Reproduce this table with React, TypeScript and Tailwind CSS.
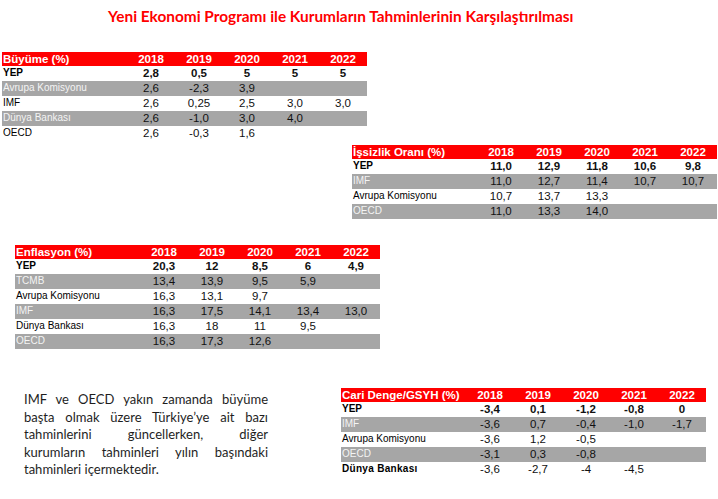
import React from "react";

type Row = {
  label: string;
  values: string[];
  shade?: boolean;
  bold?: boolean;
  boldLabel?: boolean;
};

interface TableProps {
  title: string;
  rows: Row[];
  className?: string;
}

const years = ["2018", "2019", "2020", "2021", "2022"];

function ForecastTable({ title, rows, className = "" }: TableProps) {
  return (
    <div className={`w-[365px] font-['Liberation_Sans',Arial,sans-serif] ${className}`}>
      {/* header */}
      <div className="grid grid-cols-[125px_repeat(5,48px)] h-[14px] bg-[#ff0000] text-white font-bold text-[11.5px] leading-[14px]">
        <div className="pl-[1px] whitespace-nowrap">{title}</div>
        {years.map((y) => (
          <div key={y} className="text-center">
            {y}
          </div>
        ))}
      </div>
      {rows.map((r) => (
        <div
          key={r.label}
          className={`grid grid-cols-[125px_repeat(5,48px)] h-[15px] items-center ${
            r.shade ? "bg-[#a6a6a6]" : "bg-white"
          } ${r.bold ? "font-bold" : ""}`}
        >
          <div
            className={`pl-[1px] text-[10px] leading-[13px] self-start whitespace-nowrap ${
              r.shade ? "text-[#f4f4f4]" : "text-black"
            } ${r.boldLabel ? "font-bold tracking-[0.3px]" : ""}`}
          >
            {r.label}
          </div>
          {years.map((y, i) => (
            <div key={y} className="text-center text-[11.5px] leading-[15px] text-[#111]">
              {r.values[i] ?? ""}
            </div>
          ))}
        </div>
      ))}
    </div>
  );
}

const growth: Row[] = [
  { label: "YEP", values: ["2,8", "0,5", "5", "5", "5"], bold: true },
  { label: "Avrupa Komisyonu", values: ["2,6", "-2,3", "3,9"], shade: true },
  { label: "IMF", values: ["2,6", "0,25", "2,5", "3,0", "3,0"] },
  { label: "Dünya Bankası", values: ["2,6", "-1,0", "3,0", "4,0"], shade: true },
  { label: "OECD", values: ["2,6", "-0,3", "1,6"] },
];

const unemployment: Row[] = [
  { label: "YEP", values: ["11,0", "12,9", "11,8", "10,6", "9,8"], bold: true },
  { label: "IMF", values: ["11,0", "12,7", "11,4", "10,7", "10,7"], shade: true },
  { label: "Avrupa Komisyonu", values: ["10,7", "13,7", "13,3"] },
  { label: "OECD", values: ["11,0", "13,3", "14,0"], shade: true },
];

const inflation: Row[] = [
  { label: "YEP", values: ["20,3", "12", "8,5", "6", "4,9"], bold: true },
  { label: "TCMB", values: ["13,4", "13,9", "9,5", "5,9"], shade: true },
  { label: "Avrupa Komisyonu", values: ["16,3", "13,1", "9,7"] },
  { label: "IMF", values: ["16,3", "17,5", "14,1", "13,4", "13,0"], shade: true },
  { label: "Dünya Bankası", values: ["16,3", "18", "11", "9,5"] },
  { label: "OECD", values: ["16,3", "17,3", "12,6"], shade: true },
];

const currentAccount: Row[] = [
  { label: "YEP", values: ["-3,4", "0,1", "-1,2", "-0,8", "0"], bold: true },
  { label: "IMF", values: ["-3,6", "0,7", "-0,4", "-1,0", "-1,7"], shade: true },
  { label: "Avrupa Komisyonu", values: ["-3,6", "1,2", "-0,5"] },
  { label: "OECD", values: ["-3,1", "0,3", "-0,8"], shade: true },
  { label: "Dünya Bankası", values: ["-3,6", "-2,7", "-4", "-4,5"], boldLabel: true },
];

const noteLines = [
  "IMF ve OECD yakın zamanda büyüme",
  "başta olmak üzere Türkiye’ye ait bazı",
  "tahminlerini güncellerken, diğer",
  "kurumların tahminleri yılın başındaki",
];

export default function App() {
  return (
    <div className="w-[718px] h-[499px] bg-white overflow-hidden flex flex-col">
      {/* Title */}
      <div className="h-[52px] pl-[108px] pt-[5px]">
        <h1 className="text-[#ff0000] font-bold text-[15.4px] leading-[22px] whitespace-nowrap font-['Lato','Open_Sans',sans-serif]">
          Yeni Ekonomi Programı ile Kurumların Tahminlerinin Karşılaştırılması
        </h1>
      </div>

      <ForecastTable title="Büyüme (%)" rows={growth} className="ml-[2px]" />
      <ForecastTable title="İşsizlik Oranı (%)" rows={unemployment} className="ml-[352px] mt-[4px]" />
      <ForecastTable title="Enflasyon (%)" rows={inflation} className="ml-[15px] mt-[26px]" />

      <div className="flex mt-[39px]">
        <div className="ml-[24px] w-[244px] mt-[3px] text-[13px] leading-[17.5px] text-[#1e1e1e] font-['Lato','Open_Sans',sans-serif]">
          {noteLines.map((l) => (
            <div key={l} className="text-justify [text-align-last:justify]">
              {l}
            </div>
          ))}
          <div>tahminleri içermektedir.</div>
        </div>
        <ForecastTable title="Cari Denge/GSYH (%)" rows={currentAccount} className="ml-[73px]" />
      </div>
    </div>
  );
}
